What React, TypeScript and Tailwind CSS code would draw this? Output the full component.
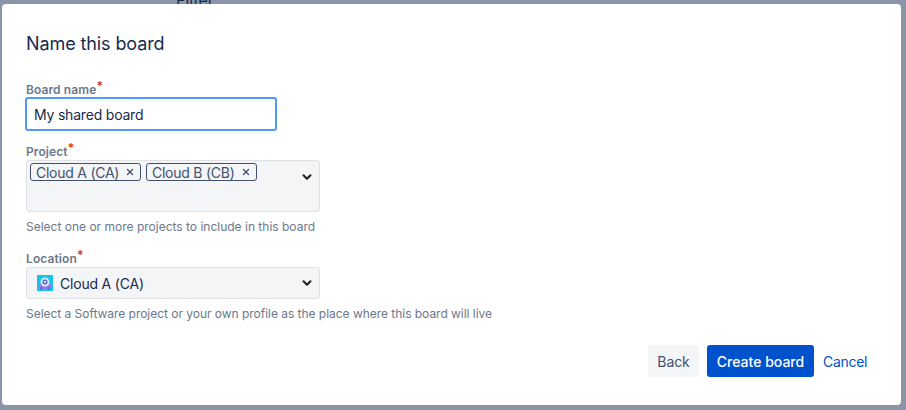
import { ChevronDown, X } from 'lucide-react';

const font = { fontFamily: 'Inter, sans-serif' };

const Label = ({ text }: { text: string }) => (
  <div className="h-[16px] text-[12px] leading-[16px] font-semibold tracking-[0.1px] text-[#6b778c]">
    {text}
    <span className="relative -top-[4px] text-[#de350b]">*</span>
  </div>
);

const Chip = ({ text }: { text: string }) => (
  <span className="flex h-[18px] w-[111px] items-center gap-[6px] rounded-[3px] border border-[#42526e] pl-[5px] text-[14px] tracking-[-0.25px] text-[#42526e]">
    {text}
    <X size={10} strokeWidth={3} className="text-[#42526e]" />
  </span>
);

const CloudAvatar = () => (
  <svg width="16" height="16" viewBox="0 0 16 16" className="shrink-0">
    <rect width="16" height="16" fill="#14c4ea" />
    <ellipse cx="8" cy="10.5" rx="6.5" ry="3.5" fill="#9a7be6" />
    <rect x="3" y="12" width="2.5" height="3" fill="#7e5fd0" />
    <rect x="10.5" y="12" width="2.5" height="3" fill="#7e5fd0" />
    <circle cx="8" cy="7" r="4.5" fill="#cfe9fb" />
    <circle cx="8" cy="7" r="2.5" fill="#5a58c8" />
    <circle cx="8" cy="7" r="1.2" fill="#d9e6fb" />
  </svg>
);

const App = () => {
  return (
    <div
      className="relative h-[410px] w-[906px] overflow-hidden bg-[#8c95a7] pb-[5px] pl-[2px] pr-[5px] pt-[4px]"
      style={font}
    >
      <span className="absolute left-[176px] top-[-10px] text-[16px] leading-[20px] text-[#172b4d]">
        Filter
      </span>
      <div className="relative flex h-full flex-col rounded-[4px] bg-white pl-[24px] pr-[34px]">
        <h1 className="mt-[28px] h-[24px] text-[18px] leading-[24px] tracking-[-0.1px] text-[#172b4d]">
          Name this board
        </h1>

        <div className="mt-[26px]">
          <Label text="Board name" />
        </div>
        <input
          readOnly
          value="My shared board"
          className="-ml-[1px] -mt-[1px] h-[34px] w-[252px] rounded-[3px] border-2 border-[#4c9aff] bg-white px-[7px] text-[14px] tracking-[-0.2px] text-[#172b4d] outline-none"
        />

        <div className="mt-[13px]">
          <Label text="Project" />
        </div>
        <div className="flex h-[52px] w-[294px] items-start rounded-[3px] border border-[#dfe1e6] bg-[#f4f5f7] pl-[3px] pr-[5px] pt-[2px]">
          <div className="flex flex-1 gap-[5px]">
            <Chip text="Cloud A (CA)" />
            <Chip text="Cloud B (CB)" />
          </div>
          <ChevronDown size={14} strokeWidth={3.5} className="mt-[7px] text-[#222222]" />
        </div>
        <p className="mt-[7px] h-[16px] text-[12px] leading-[16px] text-[#6b778c]">
          Select one or more projects to include in this board
        </p>

        <div className="mt-[16px]">
          <Label text="Location" />
        </div>
        <div className="flex h-[32px] w-[294px] items-center rounded-[3px] border border-[#dfe1e6] bg-[#f4f5f7] pl-[10px] pr-[5px]">
          <CloudAvatar />
          <span className="ml-[7px] flex-1 text-[14px] tracking-[-0.2px] text-[#172b4d]">Cloud A (CA)</span>
          <ChevronDown size={14} strokeWidth={3.5} className="text-[#222222]" />
        </div>
        <p className="mt-[7px] h-[16px] text-[12px] leading-[16px] tracking-[-0.03px] text-[#6b778c]">
          Select a Software project or your own profile as the place where this board will live
        </p>

        <div className="mt-[23px] flex items-center justify-end">
          <button
            type="button"
            className="h-[32px] w-[51px] rounded-[3px] bg-[#f4f5f7] text-[14px] tracking-[-0.1px] text-[#42526e]"
          >
            Back
          </button>
          <button
            type="button"
            className="ml-[8px] h-[32px] w-[107px] rounded-[3px] bg-[#0052cc] text-[14px] font-medium text-white"
          >
            Create board
          </button>
          <a className="ml-[9px] w-[44px] text-[14px] tracking-[-0.3px] text-[#0052cc]">Cancel</a>
        </div>
      </div>
    </div>
  );
};

export default App;
